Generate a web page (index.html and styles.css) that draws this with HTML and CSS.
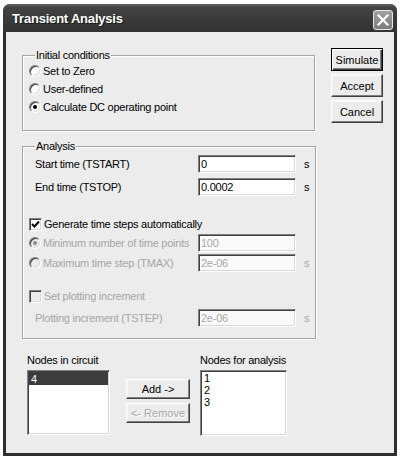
FILE: index.html
```html
<!DOCTYPE html>
<html lang="en">
<head>
    <meta charset="UTF-8">
    <title>Transient Analysis</title>
    <link rel="stylesheet" href="styles.css">
</head>
<body>
    <div class="window">
        <div class="titlebar">
            <span class="title">Transient Analysis</span>
            <span class="close">
                <svg width="12" height="12" viewBox="0 0 12 12"><path d="M1.5 1.5 L10.5 10.5 M10.5 1.5 L1.5 10.5" stroke="#fff" stroke-width="2.2" stroke-linecap="square"/></svg>
            </span>
        </div>
        <div class="client">
            <div class="left">
                <fieldset class="group group-init">
                    <legend>Initial conditions</legend>
                    <div class="opt"><span class="radio"></span>Set to Zero</div>
                    <div class="opt"><span class="radio"></span>User-defined</div>
                    <div class="opt"><span class="radio on"></span>Calculate DC operating point</div>
                </fieldset>

                <fieldset class="group group-analysis">
                    <legend>Analysis</legend>
                    <div class="field first">
                        <span class="label">Start time (TSTART)</span>
                        <span class="edit">0</span>
                        <span class="unit">s</span>
                    </div>
                    <div class="field">
                        <span class="label">End time (TSTOP)</span>
                        <span class="edit">0.0002</span>
                        <span class="unit">s</span>
                    </div>
                    <div class="opt check-auto">
                        <span class="check">
                            <svg width="9" height="9" viewBox="0 0 9 9"><path d="M1 4 L3.5 6.5 L8 1.5" fill="none" stroke="#000" stroke-width="2"/></svg>
                        </span>Generate time steps automatically
                    </div>
                    <div class="field tight dis">
                        <span class="label-opt"><span class="radio on"></span>Minimum number of time points</span>
                        <span class="edit">100</span>
                        <span class="unit"></span>
                    </div>
                    <div class="field tight dis">
                        <span class="label-opt"><span class="radio"></span>Maximum time step (TMAX)</span>
                        <span class="edit">2e-06</span>
                        <span class="unit">s</span>
                    </div>
                    <div class="opt check-plot dis"><span class="check"></span>Set plotting increment</div>
                    <div class="field dis">
                        <span class="label">Plotting increment (TSTEP)</span>
                        <span class="edit">2e-06</span>
                        <span class="unit">s</span>
                    </div>
                </fieldset>

                <div class="nodes">
                    <div class="nodecol">
                        <div class="caption">Nodes in circuit</div>
                        <div class="list list-src">
                            <div class="item sel">4</div>
                        </div>
                    </div>
                    <div class="movebtns">
                        <button class="btn">Add -&gt;</button>
                        <button class="btn" disabled>&lt;- Remove</button>
                    </div>
                    <div class="nodecol">
                        <div class="caption">Nodes for analysis</div>
                        <div class="list list-dst">
                            <div class="item">1</div>
                            <div class="item">2</div>
                            <div class="item">3</div>
                        </div>
                    </div>
                </div>
            </div>

            <div class="right">
                <button class="btn default">Simulate</button>
                <button class="btn">Accept</button>
                <button class="btn">Cancel</button>
            </div>
        </div>
    </div>
</body>
</html>
```

FILE: styles.css
```css
body {
    margin: 0;
    background: #fff;
    font-family: "Liberation Sans", Arial, sans-serif;
    font-size: 11px;
    letter-spacing: -0.25px;
    color: #000;
}
.window {
    margin: 4px 0 0 3px;
    width: 394px;
    height: 452px;
    background: #2f2f2f;
    border-radius: 7px 7px 0 0;
    display: flex;
    flex-direction: column;
    overflow: hidden;
}
.titlebar {
    height: 28px;
    flex: none;
    display: flex;
    align-items: center;
    padding: 0 4px 0 9px;
    background: linear-gradient(#6a6a6a 0, #444 3px, #3a3a3a 50%, #333 100%);
}
.title {
    color: #fff;
    font-weight: bold;
    font-size: 13px;
    letter-spacing: -0.2px;
    text-shadow: 1px 1px 0 #1a1a1a;
}
.close {
    margin-left: auto;
    width: 18px;
    height: 18px;
    margin-top: 4px;
    border: 1px solid #e8e8e8;
    border-radius: 3px;
    background: linear-gradient(#a0a0a0, #7c7c7c);
    display: flex;
    align-items: center;
    justify-content: center;
}
.client {
    flex: 1;
    margin: 0 3px 3px;
    background: #ececec;
    display: flex;
    padding: 16px 0 0 16px;
}
.left {
    width: 293px;
}
.right {
    margin-left: 16px;
    display: flex;
    flex-direction: column;
    gap: 3px;
}

/* group boxes */
.group {
    margin: 0;
    padding: 0 6px 14px;
    border: 1px solid #a4a4a4;
    box-shadow: inset 1px 1px 0 #fff, 1px 1px 0 #fff;
}
.group legend {
    margin-left: 6px;
    padding: 0 1px;
    line-height: 13px;
    background: #ececec;
}
.group-init {
    margin-top: 1px;
}
.group-analysis {
    margin-top: 9px;
    padding-bottom: 10px;
}

/* radios, checks */
.opt, .label-opt {
    display: flex;
    align-items: center;
    height: 18px;
    white-space: nowrap;
}
.radio {
    width: 10px;
    height: 10px;
    border: 1px solid;
    border-color: #808080 #fff #fff #808080;
    border-radius: 50%;
    box-shadow: inset 1px 1px 0 #404040, inset -1px -1px 0 #d8d8d8;
    background: #fff;
    margin-right: 2px;
    display: flex;
    align-items: center;
    justify-content: center;
    flex: none;
}
.radio.on::after {
    content: "";
    width: 4px;
    height: 4px;
    border-radius: 50%;
    background: #000;
}
.check {
    width: 11px;
    height: 11px;
    border: 1px solid;
    border-color: #808080 #fff #fff #808080;
    box-shadow: inset 1px 1px 0 #404040, inset -1px -1px 0 #d8d8d8;
    background: #fff;
    margin-right: 2px;
    display: flex;
    align-items: center;
    justify-content: center;
    flex: none;
}
.check-auto {
    margin-top: 18px;
}
.check-plot {
    margin-top: 14px;
}

/* edit rows */
.field {
    display: grid;
    grid-template-columns: 169px 98px auto;
    align-items: center;
    height: 20px;
    margin-top: 3px;
}
.field.first {
    margin-top: 1px;
}
.field.tight {
    margin-top: 0;
}
.label {
    padding-left: 6px;
}
.edit {
    height: 16px;
    line-height: 16px;
    padding-left: 2px;
    border: 1px solid;
    border-color: #808080 #fff #fff #808080;
    box-shadow: inset 1px 1px 0 #404040, inset -1px -1px 0 #d8d8d8;
    background: #fff;
}
.unit {
    padding-left: 8px;
}
.dis {
    color: #a6a6a6;
}
.dis .radio, .dis .check {
    background: #ececec;
}
.dis .radio.on::after {
    background: #8c8c8c;
}
.dis .edit {
    background: #fafafa;
}

/* node lists */
.nodes {
    display: flex;
    margin-top: 15px;
    padding-left: 5px;
}
.caption {
    line-height: 13px;
    margin-bottom: 3px;
    white-space: nowrap;
}
.list {
    height: 61px;
    padding: 1px;
    border: 1px solid;
    border-color: #808080 #fff #fff #808080;
    box-shadow: inset 1px 1px 0 #404040, inset -1px -1px 0 #d8d8d8;
    background: #fff;
}
.list-src {
    width: 79px;
}
.list-dst {
    width: 83px;
    height: 62px;
}
.item {
    line-height: 12px;
    padding-left: 2px;
}
.item.sel {
    background: #3c3c3c;
    color: #fff;
    padding-top: 1px;
}
.movebtns {
    margin-left: 16px;
    margin-right: 10px;
    padding-top: 25px;
    display: flex;
    flex-direction: column;
    gap: 4px;
}
.movebtns .btn {
    width: 64px;
    height: 20px;
}

/* push buttons */
.btn {
    width: 52px;
    height: 23px;
    padding: 0;
    font: inherit;
    color: #000;
    background: #ececec;
    border: 1px solid;
    border-color: #fff #404040 #404040 #fff;
    box-shadow: inset -1px -1px 0 #808080, inset 1px 1px 0 #f4f4f4;
}
.btn.default {
    border: 1px solid #000;
    box-shadow: inset 1px 1px 0 #fff, inset -1px -1px 0 #404040, inset -2px -2px 0 #808080;
}
.btn:disabled {
    color: #a6a6a6;
    text-shadow: 1px 1px 0 #fff;
}
```
